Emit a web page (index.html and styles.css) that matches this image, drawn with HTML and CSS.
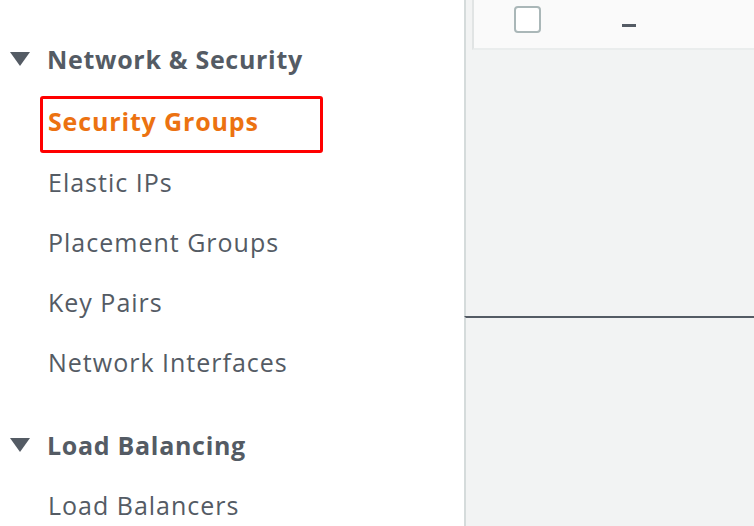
FILE: index.html
```html
<!DOCTYPE html>
<html>
<head>
<meta charset="utf-8">
<link rel="stylesheet" href="styles.css">
</head>
<body>
<div class="page">
  <nav class="sidebar">
    <div class="group-head">
      <svg class="caret" width="20" height="14" viewBox="0 0 20 14"><polygon points="0,0 20,0 10,14" fill="#545b64"/></svg>
      <span>Network &amp; Security</span>
    </div>
    <a class="item active">Security Groups</a>
    <a class="item">Elastic IPs</a>
    <a class="item">Placement Groups</a>
    <a class="item">Key Pairs</a>
    <a class="item">Network Interfaces</a>
    <div class="group-head second">
      <svg class="caret" width="20" height="14" viewBox="0 0 20 14"><polygon points="0,0 20,0 10,14" fill="#545b64"/></svg>
      <span>Load Balancing</span>
    </div>
    <a class="item">Load Balancers</a>
  </nav>
  <main class="main">
    <section class="upper">
      <div class="row">
        <span class="checkbox"></span>
        <span class="dash"></span>
      </div>
    </section>
    <section class="lower"></section>
  </main>
</div>
</body>
</html>
```
FILE: styles.css
```css
html, body {
  margin: 0;
  padding: 0;
  height: 100%;
  overflow: hidden;
}
body {
  font-family: "Open Sans", "Liberation Sans", sans-serif;
  color: #545b64;
  background: #ffffff;
}
.page {
  display: flex;
  height: 526px;
}
.sidebar {
  width: 464px;
  flex: none;
  padding-top: 29px;
  box-sizing: border-box;
  display: flex;
  flex-direction: column;
  align-items: flex-start;
}
.group-head {
  display: flex;
  align-items: center;
  gap: 17px;
  padding-left: 10px;
  height: 60px;
  font-size: 25px;
  font-weight: 700;
  line-height: 60px;
  letter-spacing: 0.7px;
  white-space: nowrap;
}
.group-head.second {
  margin-top: 23px;
}
.caret {
  display: block;
  margin-top: -1px;
}
.item {
  display: block;
  padding-left: 48px;
  font-size: 25px;
  line-height: 60px;
  height: 60px;
  letter-spacing: 1px;
  white-space: nowrap;
}
.item.active {
  margin: 7px 0 -1px 40px;
  width: 283px;
  height: 57px;
  box-sizing: border-box;
  border: 3px solid #ff0000;
  border-radius: 3px;
  padding: 0 0 7px 5px;
  line-height: 44px;
  color: #ec7211;
  font-weight: 700;
  letter-spacing: 0.85px;
}
.main {
  flex: 1;
  display: flex;
  flex-direction: column;
  background: #f2f3f3;
}
.upper {
  height: 316px;
  border-left: 2px solid #d5dbdb;
  padding-left: 6px;
  box-sizing: border-box;
}
.row {
  height: 50px;
  box-sizing: border-box;
  background: #fafafa;
  border-left: 2px solid #e1e4e4;
  border-bottom: 2px solid #eaeded;
  display: flex;
  align-items: flex-start;
}
.checkbox {
  display: block;
  width: 27px;
  height: 27px;
  box-sizing: border-box;
  margin: 6px 0 0 40px;
  border: 2px solid #aab7b8;
  border-radius: 4px;
  background: #ffffff;
}
.dash {
  display: block;
  width: 14px;
  height: 3px;
  margin: 24px 0 0 81px;
  background: #545b64;
}
.lower {
  flex: 1;
  border-top: 2px solid #545b64;
  border-left: 2px solid #d5dbdb;
}
```
